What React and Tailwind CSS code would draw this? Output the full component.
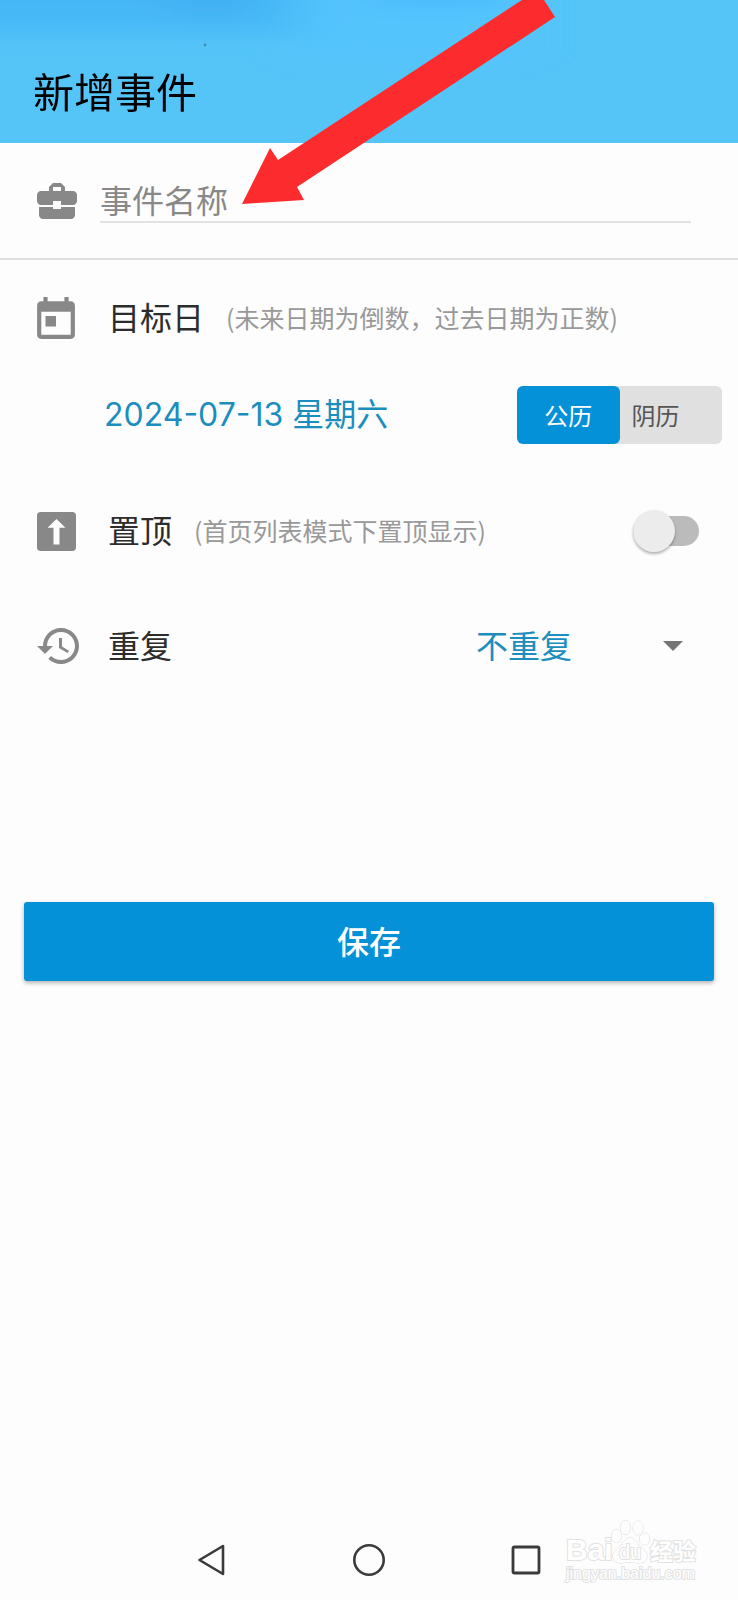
import { useState } from "react";

function BriefcaseIcon() {
  return (
    <svg viewBox="2 3 20 18" className="h-9 w-10" fill="currentColor" aria-hidden="true">
      <path d="M10 16v-1H3.01L3 19c0 1.11.89 2 2 2h14c1.11 0 2-.89 2-2v-4h-7v1h-4zm10-9h-4.01V5l-2-2h-4l-2 2v2H4c-1.1 0-2 .9-2 2v3c0 1.11.89 2 2 2h6v-2h4v2h6c1.1 0 2-.9 2-2V9c0-1.1-.9-2-2-2zm-6 0h-4V5h4v2z" />
    </svg>
  );
}

function CalendarIcon() {
  return (
    <svg viewBox="3 1 18 20" className="h-[42px] w-[38px]" fill="currentColor" aria-hidden="true">
      <path d="M19 3h-1V1h-2v2H8V1H6v2H5c-1.11 0-1.99.9-1.99 2L3 19c0 1.1.89 2 2 2h14c1.1 0 2-.9 2-2V5c0-1.1-.9-2-2-2zm0 16H5V8h14v11zM7 10h5v5H7z" />
    </svg>
  );
}

function PinIcon() {
  return (
    <svg viewBox="0 0 118 118" className="size-[39px]" aria-hidden="true">
      <rect width="118" height="118" rx="11" fill="currentColor" />
      <path d="M59 21 86 48H68V98H50V48H32Z" fill="#fdfdfd" />
    </svg>
  );
}

function HistoryIcon() {
  return (
    <svg viewBox="1 3 21 18" className="h-9 w-[42px]" fill="currentColor" aria-hidden="true">
      <path d="M13 3c-4.97 0-9 4.03-9 9H1l3.89 3.89.07.14L9 12H6c0-3.87 3.13-7 7-7s7 3.13 7 7-3.13 7-7 7c-1.93 0-3.68-.79-4.94-2.06l-1.42 1.42C8.27 19.99 10.51 21 13 21c4.97 0 9-4.03 9-9s-4.03-9-9-9zm-1 5v5l4.28 2.54.72-1.21-3.5-2.08V8H12z" />
    </svg>
  );
}

function IconSlot({ children }) {
  return <span className="flex w-[71px] shrink-0 items-center text-[#888]">{children}</span>;
}

function Watermark() {
  return (
    <div className="absolute right-10 bottom-4 w-[132px] text-white select-none [-webkit-text-stroke:2px_#e2e2e2] [paint-order:stroke]">
      <div className="flex h-11 items-end">
        <span className="w-11 font-['Liberation_Sans'] text-[30px] leading-7 font-bold">Bai</span>
        <span className="relative flex h-11 w-10 shrink-0 items-end justify-center">
          <svg viewBox="0 0 40 44" className="absolute inset-0" fill="#fdfdfd" stroke="#dcdcdc" aria-hidden="true">
            <ellipse cx="6.500" cy="16" rx="5" ry="6.500" />
            <ellipse cx="15.500" cy="7.500" rx="5" ry="7" />
            <ellipse cx="28" cy="8" rx="5" ry="7" />
            <ellipse cx="34.500" cy="19" rx="5" ry="6" />
            <path d="M20 18c-4 0-6 3-8 6s-9 6-9 12 4 7 8 7 6-1 9-1 5 1 9 1 8-1 8-7-7-9-9-12-4-6-8-6Z" />
          </svg>
          <span className="relative font-['Liberation_Sans'] text-[20px] leading-6">du</span>
        </span>
        <span className="text-[23px] leading-7 font-bold whitespace-nowrap">经验</span>
      </div>
      <div className="font-['Liberation_Sans'] text-[16px] leading-5">jingyan.baidu.com</div>
    </div>
  );
}

function Header() {
  return (
    <header className="relative h-[143px] overflow-hidden bg-[#55c5f8]">
      <svg viewBox="0 0 738 143" preserveAspectRatio="none" className="absolute inset-0 size-full" aria-hidden="true">
        <defs>
          <filter id="soft" x="-20%" y="-100%" width="140%" height="300%">
            <feGaussianBlur stdDeviation="24 9" />
          </filter>
        </defs>
        <g filter="url(#soft)">
          <rect x="-60" y="-40" width="360" height="76" fill="#4abaf7" />
          <rect x="-60" y="-30" width="340" height="40" fill="#42b2f3" opacity="0.6" />
          <rect x="170" y="-30" width="80" height="48" fill="#3fabf3" opacity="0.5" />
          <rect x="300" y="-10" width="220" height="70" fill="#56c3ff" opacity="0.7" />
          <rect x="370" y="-30" width="130" height="36" fill="#48b9fd" opacity="0.8" />
        </g>
        <circle cx="205" cy="45" r="1.4" fill="#3f8fb8" />
      </svg>
      <h1 className="relative pt-[60px] pl-[33px] text-[41px] leading-[60px] text-black">新增事件</h1>
    </header>
  );
}

export default function App() {
  const [name, setName] = useState("");
  const [calendar, setCalendar] = useState("solar");
  const [pinned, setPinned] = useState(false);
  const [repeat, setRepeat] = useState("none");

  return (
    <div className="relative flex min-h-screen flex-col overflow-hidden bg-[#fdfdfd] font-['Noto_Sans_CJK_SC',sans-serif] text-[#2c2c2c]">
      <Header />

      <form className="flex flex-col" onSubmit={(e) => e.preventDefault()}>
        <div className="flex h-[117px] items-center border-b-2 border-[#dedede] pr-[47px] pl-[37px]">
          <span className="flex w-[63px] shrink-0 text-[#888]">
            <BriefcaseIcon />
          </span>
          <input
            type="text"
            aria-label="事件名称"
            placeholder="事件名称"
            value={name}
            onChange={(e) => setName(e.target.value)}
            className="h-11 w-full min-w-0 border-b-2 border-[#e2e2e2] bg-transparent pb-0.5 text-[32px] leading-10 outline-none placeholder:text-[#888]"
          />
        </div>

        <div className="flex h-[116px] items-center pl-[37px]">
          <IconSlot>
            <CalendarIcon />
          </IconSlot>
          <span className="pb-1 text-[32px]">目标日</span>
          <span className="ml-[22px] text-[25px] text-[#999]">(未来日期为倒数，过去日期为正数)</span>
        </div>

        <div className="flex h-[78px] items-center justify-between pr-4 pl-[104px]">
          <button type="button" className="font-[Inter,'Noto_Sans_CJK_SC',sans-serif] text-[32px] text-[#1b8dbe]">
            2024-07-13 星期六
          </button>
          <div className="grid h-[58px] w-[205px] grid-cols-2 rounded-md bg-[#e0e0e0] text-[24px]" role="group" aria-label="历法">
            <button
              type="button"
              aria-pressed={calendar === "solar"}
              onClick={() => setCalendar("solar")}
              className="rounded-md text-[#555] aria-pressed:bg-[#0591d7] aria-pressed:text-white"
            >
              公历
            </button>
            <button
              type="button"
              aria-pressed={calendar === "lunar"}
              onClick={() => setCalendar("lunar")}
              className="rounded-md pl-3 text-left text-[#555] aria-pressed:bg-[#0591d7] aria-pressed:text-white"
            >
              阴历
            </button>
          </div>
        </div>

        <div className="flex h-[154px] items-center pr-[39px] pl-[37px]">
          <IconSlot>
            <PinIcon />
          </IconSlot>
          <label htmlFor="pin" className="pb-1 text-[32px]">
            置顶
          </label>
          <span className="ml-[22px] text-[25px] text-[#999]">(首页列表模式下置顶显示)</span>
          <input
            id="pin"
            type="checkbox"
            checked={pinned}
            onChange={(e) => setPinned(e.target.checked)}
            className="relative ml-auto h-[42px] w-[66px] shrink-0 appearance-none before:absolute before:inset-x-0 before:top-1.5 before:h-[30px] before:rounded-full before:bg-[#bbb] after:absolute after:top-0 after:left-0 after:size-[42px] after:rounded-full after:bg-[#ececec] after:shadow-[0_2px_3px_rgba(0,0,0,0.3)] checked:before:bg-[#8ccbea] checked:after:left-6 checked:after:bg-[#0591d7]"
          />
        </div>

        <div className="flex h-[76px] items-center justify-between pr-[55px] pl-[37px]">
          <div className="flex items-center">
            <IconSlot>
              <HistoryIcon />
            </IconSlot>
            <label htmlFor="repeat" className="pb-1 text-[32px]">
              重复
            </label>
          </div>
          <div className="grid w-[207px] items-center">
            <select
              id="repeat"
              value={repeat}
              onChange={(e) => setRepeat(e.target.value)}
              className="col-start-1 row-start-1 appearance-none bg-transparent pb-1 text-[32px] text-[#1b8dbe] outline-none"
            >
              <option value="none">不重复</option>
            </select>
            <svg viewBox="0 0 20 10" className="pointer-events-none col-start-1 row-start-1 h-2.5 w-5 justify-self-end" aria-hidden="true">
              <path d="M0 0H20L10 10Z" fill="#757575" />
            </svg>
          </div>
        </div>

        <button
          type="submit"
          className="mx-6 mt-[218px] h-[79px] rounded-[3px] bg-[#0591d7] pb-1 text-[32px] font-medium text-white shadow-[0_2px_4px_rgba(0,0,0,0.3)]"
        >
          保存
        </button>
      </form>

      <nav className="relative mt-auto flex h-20 items-center justify-center gap-[109px] text-[#3a3a3a]">
        <button type="button" aria-label="返回" className="flex size-12 items-center justify-center">
          <svg viewBox="0 0 28 32" className="h-8 w-7" fill="none" stroke="currentColor" strokeWidth="2.6" strokeLinejoin="round" aria-hidden="true">
            <path d="M25 2V30L1.500 16Z" />
          </svg>
        </button>
        <button type="button" aria-label="主页" className="flex size-12 items-center justify-center">
          <svg viewBox="0 0 32 32" className="size-8" fill="none" stroke="currentColor" strokeWidth="2.6" aria-hidden="true">
            <circle cx="16" cy="16" r="14.7" />
          </svg>
        </button>
        <button type="button" aria-label="最近任务" className="flex size-12 items-center justify-center">
          <svg viewBox="0 0 30 30" className="size-[30px]" fill="none" stroke="currentColor" strokeWidth="2.8" aria-hidden="true">
            <rect x="2" y="2" width="26" height="26" rx="1.5" />
          </svg>
        </button>
        <Watermark />
      </nav>

      <svg viewBox="0 0 320 210" className="pointer-events-none absolute top-0 left-[240px] h-[210px] w-[320px]" aria-hidden="true">
        <path d="M282 0H304L315 17 57 187 64 200 2 204 30 148 38 160Z" fill="#fc2b2d" />
      </svg>
    </div>
  );
}
